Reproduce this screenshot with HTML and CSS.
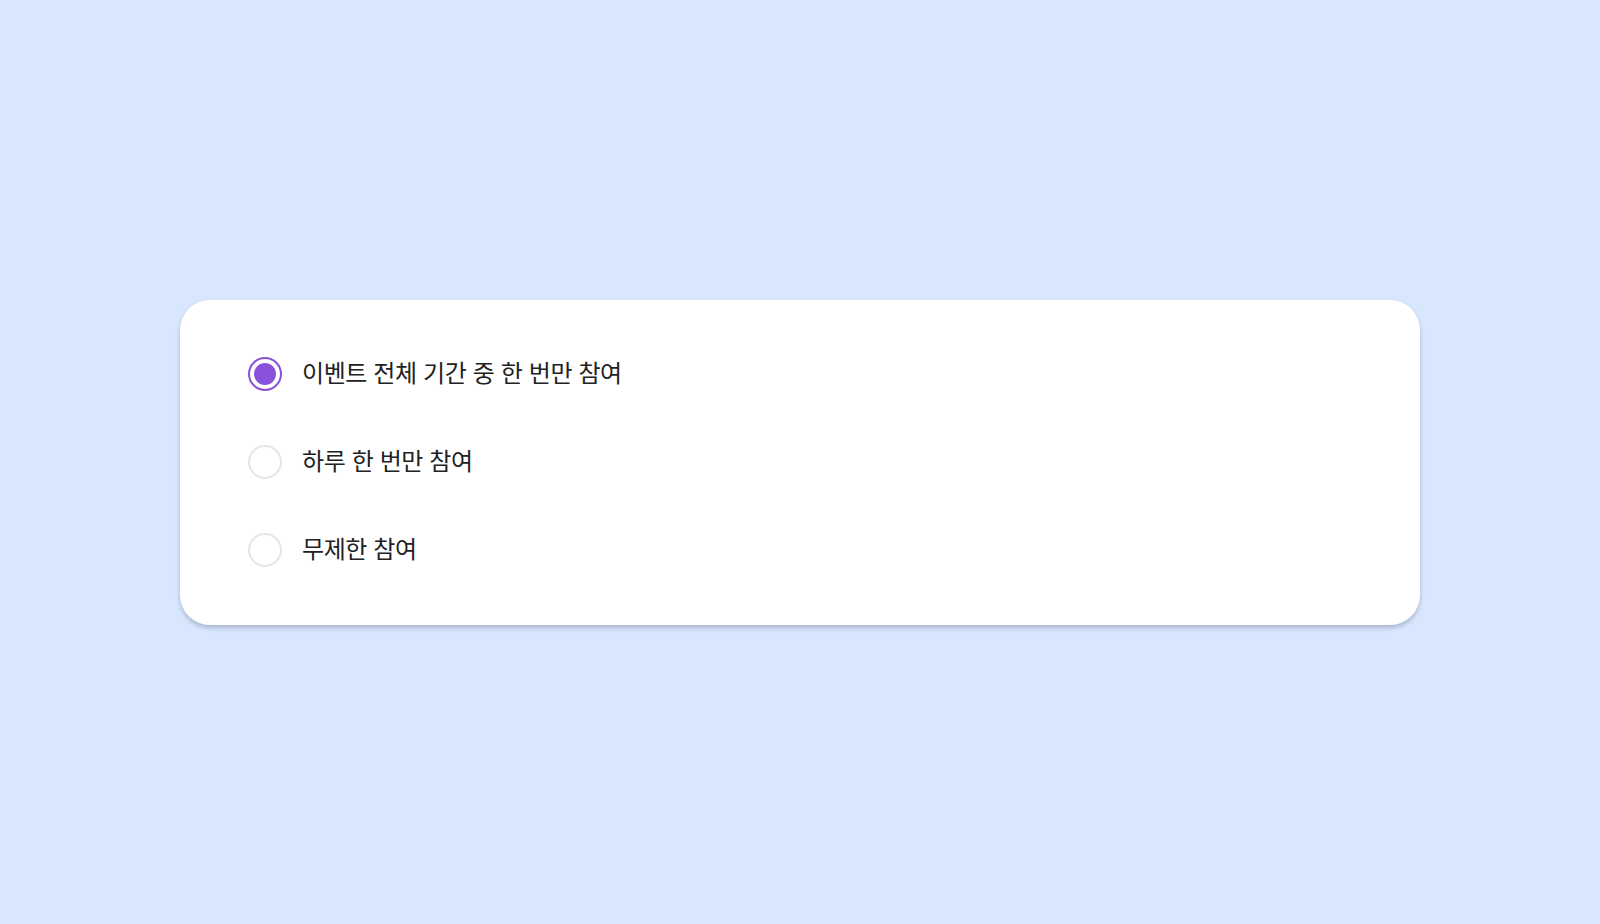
FILE: index.html
```html
<!DOCTYPE html>
<html lang="ko">

<head>
    <meta charset="UTF-8">
    <meta name="viewport" content="width=device-width, initial-scale=1.0">
    <title>참여 횟수 선택</title>
    <link rel="stylesheet" href="styles.css">
</head>

<body>
    <div class="card">
        <label class="option">
            <input type="radio" name="limit" checked>
            <span class="radio"></span>
            <span class="label">이벤트 전체 기간 중 한 번만 참여</span>
        </label>
        <label class="option">
            <input type="radio" name="limit">
            <span class="radio"></span>
            <span class="label">하루 한 번만 참여</span>
        </label>
        <label class="option">
            <input type="radio" name="limit">
            <span class="radio"></span>
            <span class="label">무제한 참여</span>
        </label>
    </div>
</body>

</html>
```

FILE: styles.css
```css
body {
    margin: 0;
    min-height: 100vh;
    display: flex;
    align-items: center;
    justify-content: center;
    background-color: #d8e6fe;
    font-family: "Noto Sans CJK KR", "Noto Sans", sans-serif;
}

.card {
    width: 1240px;
    box-sizing: border-box;
    padding: 57px 68px 58px;
    background: #fff;
    border-radius: 30px;
    box-shadow: 0 3px 4px rgba(60, 70, 90, 0.28);
    display: flex;
    flex-direction: column;
    gap: 54px;
}

.option {
    display: flex;
    align-items: center;
    gap: 20px;
    cursor: pointer;
}

.option input {
    display: none;
}

.radio {
    width: 34px;
    height: 34px;
    box-sizing: border-box;
    border: 2px solid #e6e6e6;
    border-radius: 50%;
    padding: 4px;
    flex-shrink: 0;
}

.option input:checked + .radio {
    border-color: #8a52dc;
}

.option input:checked + .radio::after {
    content: "";
    display: block;
    width: 100%;
    height: 100%;
    border-radius: 50%;
    background: #8a52dc;
}

.label {
    font-size: 24px;
    line-height: 30px;
    margin-bottom: 4px;
    letter-spacing: -0.4px;
    color: #222;
}
```
